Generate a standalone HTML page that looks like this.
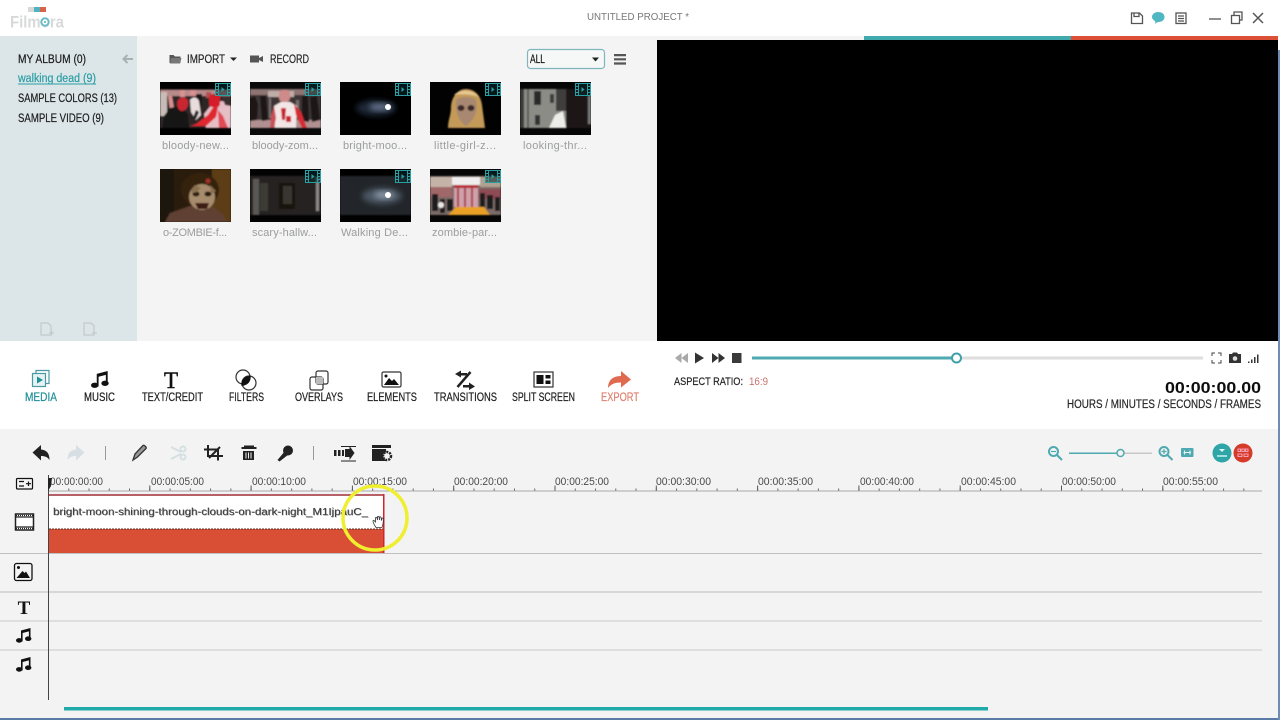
<!DOCTYPE html>
<html><head><meta charset="utf-8"><title>Filmora</title>
<style>
html,body{margin:0;padding:0;width:1280px;height:720px;overflow:hidden;background:#fff}
svg{display:block;font-family:"Liberation Sans",sans-serif}
.l{font-size:11.500px;fill:#1c1c1c;stroke:#1c1c1c;stroke-width:.2px}
.t{font-size:11.500px;fill:#262626;stroke:#262626;stroke-width:.2px}
.c{font-size:11px;fill:#9b9d9e}
.r{font-size:11px;fill:#4a4a4a}
</style></head><body>
<svg width="1280" height="720" viewBox="0 0 1280 720" xmlns="http://www.w3.org/2000/svg">
<defs>
<filter id="b1" x="-20%" y="-20%" width="140%" height="140%"><feGaussianBlur stdDeviation=".8"/></filter>
<filter id="b3" x="-40%" y="-40%" width="180%" height="180%"><feGaussianBlur stdDeviation="3"/></filter>
<filter id="s" x="-5%" y="-5%" width="110%" height="110%"><feGaussianBlur stdDeviation="0.25"/></filter>
<g id="film" fill="none" stroke="#2a9ea3" stroke-width="1"><rect x="0.5" y="0.5" width="15" height="12" fill="#0a2a2c" fill-opacity=".55"/><path d="M3.5 .5v12M12.5 .5v12M.5 3.5h3M.5 6.5h3M.5 9.5h3M12.5 3.5h3M12.5 6.5h3M12.5 9.5h3"/><path d="M6.5 4l3 2.500-3 2.500z" fill="#2a9ea3" stroke="none"/></g>
<g id="note" fill="#111"><path d="M5 2.500 14.500 0v11h-1.600V3.400L6.600 5v8.500H5z"/><ellipse cx="3.200" cy="12.400" rx="3.200" ry="2.300"/><ellipse cx="12.200" cy="10.700" rx="3.200" ry="2.300"/></g>
<clipPath id="th"><rect width="71" height="53"/></clipPath>
</defs>

<!-- base -->
<rect width="1280" height="720" fill="#fff"/>
<rect x="0" y="36" width="137" height="305" fill="#dce6e8"/>
<rect x="137" y="36" width="520" height="305" fill="#f4f4f4"/>
<rect x="657" y="40" width="621" height="301" fill="#000"/>
<rect x="657" y="36" width="207" height="4" fill="#f4f4f4"/>
<rect x="864" y="36" width="207" height="4" fill="#3fa9ad"/>
<rect x="1071" y="36" width="207" height="4" fill="#dd5038"/>
<rect x="0" y="429" width="1278" height="289" fill="#f3f3f3"/>
<rect x="0" y="718" width="1280" height="2" fill="#5a7aa8"/>
<rect x="1278" y="50" width="2" height="670" fill="#6f8cb4"/>

<!-- logo -->
<g filter="url(#s)">
<rect x="28" y="7" width="6" height="5" fill="#d8d8d8"/><rect x="34" y="7" width="6" height="5" fill="#4fb4c0"/><rect x="40" y="7" width="6" height="5" fill="#d9624a"/>
<text x="10" y="27.500" font-size="16.500" font-weight="bold" fill="#d8dada" textLength="54" lengthAdjust="spacingAndGlyphs">Filmora</text>
<circle cx="45" cy="22" r="5" fill="#fff"/><circle cx="45" cy="22" r="3.700" fill="none" stroke="#6bbcc7" stroke-width="2"/><circle cx="45" cy="22" r="1" fill="#4fb0bd"/>
</g>
<text x="587" y="20" font-size="10.500" fill="#777" textLength="102" lengthAdjust="spacingAndGlyphs">UNTITLED PROJECT *</text>

<!-- window icons -->
<g fill="none" stroke="#555" stroke-width="1.300">
<path d="M1131.500 13h8l3 3v7.500h-11z"/><path d="M1134 13v3.500h5V13"/>
<rect x="1176" y="13" width="10" height="10.500"/><path d="M1178 16h6M1178 18.500h6M1178 21h6"/>
<path d="M1209 19h12"/><rect x="1231.500" y="15.500" width="8" height="8"/><path d="M1234 15v-3h8v8h-2.500"/>
<path d="M1253 13l10 10M1263 13l-10 10" stroke-width="1.500"/>
</g>
<path d="M1158 12c4 0 6.500 2 6.500 5s-2.500 5-6 5c-1 0-1.500 .5-3.500 2 .5-1.500 .5-2.500 0-3-1.500-1-3-2.300-3-4 0-3 3-5 6-5z" fill="#4fb6c2"/>

<!-- sidebar -->
<g filter="url(#s)">
<text class="l" x="18" y="63" textLength="68" lengthAdjust="spacingAndGlyphs">MY ALBUM (0)</text>
<text class="l" x="18" y="82" style="fill:#2b9ea5;stroke:#2b9ea5" textLength="78" lengthAdjust="spacingAndGlyphs">walking dead (9)</text>
<rect x="18" y="83.500" width="78" height="1" fill="#2b9ea5"/>
<text class="l" x="18" y="102" textLength="99" lengthAdjust="spacingAndGlyphs">SAMPLE COLORS (13)</text>
<text class="l" x="18" y="122" textLength="86" lengthAdjust="spacingAndGlyphs">SAMPLE VIDEO (9)</text>
</g>
<path d="M133 59h-9M127.500 55l-4 4 4 4" fill="none" stroke="#a9b0b2" stroke-width="2"/>
<g fill="none" stroke="#c4cacb" stroke-width="1.300"><path d="M41 323h7l3 3v9H41z"/><path d="M84 323h7l3 3v9H84z"/><path d="M49 333h5M51.500 330.500v5M92 333h5"/></g>

<!-- media header -->
<path d="M169.500 55h4l1.500 1.500h5.500V63h-11z" fill="#555"/>
<path d="M171 58h10.500l-1.500 5.500h-10z" fill="#777"/>
<text class="t" x="187" y="63" textLength="38" lengthAdjust="spacingAndGlyphs">IMPORT</text>
<path d="M230 57.500h7l-3.500 3.500z" fill="#222"/>
<path d="M250 55.500h9v7h-9zM259 58l4-2v6l-4-2z" fill="#555"/>
<text class="t" x="270" y="63" textLength="39" lengthAdjust="spacingAndGlyphs">RECORD</text>
<rect x="527.500" y="49.500" width="77" height="19" rx="3" fill="#f6f8f8" stroke="#7fb5bd" stroke-width="1.200"/>
<text class="t" x="530" y="63" textLength="15" lengthAdjust="spacingAndGlyphs" style="fill:#111">ALL</text>
<path d="M592 57.500h7l-3.500 4z" fill="#222"/>
<path d="M614 54h12v2.200h-12zM614 58.200h12v2.200h-12zM614 62.400h12v2.200h-12z" fill="#555"/>

<!-- thumbnails -->
<g transform="translate(160 82)" clip-path="url(#th)"><rect width="71" height="53" fill="#000"/>
<g filter="url(#b1)">
<rect y="7" width="71" height="39" fill="#2e2626"/>
<rect x="0" y="8" width="71" height="6" fill="#b88a8a"/>
<rect x="0" y="10" width="7" height="24" fill="#c8bcb8"/>
<path d="M8 14l4 0 2 12-4 2zM20 8h5v7h-5zM30 8h6v6h-6z" fill="#d89090"/>
<path d="M36 12h6v12h-6z" fill="#1a1818"/>
<path d="M46 10h5v6h-5z" fill="#b05050"/>
<path d="M2 46l2-12 6-8 10-2 8 8 1 14z" fill="#151313"/>
<path d="M18 18c3-4 9-3 10 1 1 5-2 10-6 10s-6-6-4-11z" fill="#c92833"/>
<path d="M30 18c3-4 7-3 9 1l2 14-5 5-5-8z" fill="#e8dcdc"/>
<path d="M36 28l-3 8 3 1 3-7z" fill="#222"/>
<path d="M52 22l10-3 9 3v24H46l-2-14z" fill="#e6bec6"/>
<path d="M30 44l6-2 12-9 6-9 4 1-2 10-10 9z" fill="#e0262f"/>
<rect x="49" y="12" width="11" height="13" rx="3" fill="#d41f2b"/>
<path d="M58 28l5 6 5 12h-9z" fill="#e24a55"/>
<path d="M62 14l9 0v10l-6-1z" fill="#3a2e2e"/>
</g>
<use href="#film" x="55" y="1"/></g>

<g transform="translate(250 82)" clip-path="url(#th)"><rect width="71" height="53" fill="#0a0a0a"/>
<g filter="url(#b1)">
<rect y="7" width="71" height="39" fill="#3d3534"/>
<rect x="0" y="7" width="71" height="6" fill="#8e7472"/>
<rect x="18" y="9" width="26" height="6" fill="#c0aca8"/>
<rect x="0" y="38" width="71" height="8" fill="#b09090"/>
<path d="M0 16l5-2 3 8-1 16-7 1zM10 14l6 0 2 24-6 1zM52 14l6 0 1 26-7-1zM60 15l7-1 3 24-8 2z" fill="#1a1716"/>
<path d="M19 16h2v20h-2zM46 18h3v16h-3z" fill="#787070"/>
<path d="M24 24l7-4h9l7 4-1 22H25z" fill="#f2e6e6"/>
<rect x="29" y="8" width="11" height="12" rx="4" fill="#cf8a8a"/>
<path d="M31 26h5l-1 12h-3zM36 34h5v6h-5z" fill="#c9212d"/>
<path d="M44 22l7 8 6 16h-5l-6-13z" fill="#d62b36"/>
<path d="M24 24l-3 10-1 12h4l2-10z" fill="#c85058"/>
</g>
<use href="#film" x="55" y="1"/></g>

<g transform="translate(340 82)" clip-path="url(#th)"><rect width="71" height="53" fill="#000"/>
<ellipse cx="36" cy="26" rx="20" ry="8" fill="#1e2636" filter="url(#b3)"/>
<ellipse cx="40" cy="25" rx="11" ry="3.500" fill="#66748f" filter="url(#b3)"/>
<circle cx="48" cy="25" r="3" fill="#fff" filter="url(#s)"/>
<use href="#film" x="55" y="1"/></g>

<g transform="translate(430 82)" clip-path="url(#th)"><rect width="71" height="53" fill="#020202"/>
<g filter="url(#b1)"><path d="M18 46c0-8 3-13 3-20 0-10 6-19 15-19s15 7 16 16c1 8 2 15 3 23z" fill="#c49a58"/><path d="M26 18c3-4 17-4 20 0 2 8 0 19-10 26-7-4-11-15-10-26z" fill="#a88870"/><ellipse cx="31" cy="26" rx="3.500" ry="3" fill="#3a2a2a"/><ellipse cx="41" cy="26" rx="3.500" ry="3" fill="#3a2a2a"/><path d="M24 13c6-6 19-6 25 2-6-3-19-3-25-2z" fill="#e6c890"/></g>
<use href="#film" x="55" y="1"/></g>

<g transform="translate(520 82)" clip-path="url(#th)"><rect width="71" height="53" fill="#060606"/>
<g filter="url(#b1)"><rect y="7" width="46" height="39" fill="#8c8c86"/><rect x="46" y="7" width="25" height="39" fill="#1a1816"/><rect x="14" y="9" width="7" height="14" fill="#2a2a2a"/><rect x="30" y="12" width="4" height="9" fill="#3a3a3a"/><rect x="15" y="33" width="5" height="10" fill="#333"/><path d="M29 46l6-13 8-4 3 17z" fill="#ecece8"/><rect x="0" y="7" width="4" height="39" fill="#3a3a38"/><rect x="7" y="7" width="2" height="39" fill="#5a5a56"/><rect x="36" y="7" width="10" height="22" fill="#403e3c"/><rect x="68" y="14" width="3" height="28" fill="#777"/></g>
<use href="#film" x="55" y="1"/></g>

<g transform="translate(160 169)" clip-path="url(#th)"><rect width="71" height="53" fill="#1a120a"/>
<g filter="url(#b1)"><rect width="71" height="53" fill="#2a1c0e"/><rect x="52" width="19" height="53" fill="#5c3c18"/><rect x="0" width="14" height="53" fill="#1c1810"/><path d="M5 53l5-9 20-7h22l12 9 3 7z" fill="#5e4030"/><ellipse cx="40" cy="21" rx="19" ry="17" fill="#36220f"/><ellipse cx="42" cy="28" rx="13" ry="13" fill="#a68c6c"/><ellipse cx="36" cy="25" rx="3.500" ry="2.500" fill="#2a1a10"/><ellipse cx="48" cy="25" rx="3.500" ry="2.500" fill="#2a1a10"/><path d="M35 34h14l-2 6h-9z" fill="#3e1a14"/><circle cx="48" cy="12" r="2.500" fill="#a03028"/><path d="M30 22l5-6 6 3-6 5zM50 16l6 6-5 3z" fill="#8a7050"/></g></g>

<g transform="translate(250 169)" clip-path="url(#th)"><rect width="71" height="53" fill="#030303"/>
<g filter="url(#b1)"><rect y="7" width="71" height="39" fill="#262320"/><rect x="3" y="10" width="6" height="36" fill="#5a5854"/><rect x="10" y="14" width="8" height="28" fill="#3c3a36"/><rect x="29" y="14" width="16" height="26" fill="#14120f"/><rect x="33" y="17" width="9" height="18" fill="#3a3632"/><rect x="66" y="8" width="3" height="34" fill="#8a8884"/></g>
<use href="#film" x="55" y="1"/></g>

<g transform="translate(340 169)" clip-path="url(#th)"><rect width="71" height="53" fill="#000"/>
<rect y="7" width="71" height="39" fill="#23272c" filter="url(#b1)"/>
<ellipse cx="42" cy="27" rx="20" ry="8" fill="#4c5664" filter="url(#b3)"/>
<ellipse cx="44" cy="26" rx="10" ry="3.500" fill="#8e9aaa" filter="url(#b3)"/>
<circle cx="48" cy="26" r="3" fill="#fff" filter="url(#s)"/>
<use href="#film" x="55" y="1"/></g>

<g transform="translate(430 169)" clip-path="url(#th)"><rect width="71" height="53" fill="#060606"/>
<g filter="url(#b1)">
<rect y="7" width="71" height="39" fill="#7c6c68"/>
<rect x="22" y="8" width="28" height="8" fill="#f0eeee"/>
<rect x="0" y="8" width="22" height="10" fill="#c4b4a8"/>
<rect x="50" y="8" width="21" height="10" fill="#b0a090"/>
<rect x="0" y="18" width="22" height="10" fill="#a06868"/>
<rect x="24" y="16" width="24" height="22" fill="#d0a0aa"/>
<path d="M24 16h24v3H24z" fill="#b8222c"/><path d="M27 18h2v20h-2zM34 18h2v20h-2zM41 18h2v20h-2z" fill="#a8404a"/>
<rect x="49" y="20" width="22" height="10" fill="#8e4c54"/>
<path d="M2 25h6v17H2zM10 30h5v14h-5zM17 30h6v12h-6zM50 24h5v14h-5zM57 26h6v14h-6zM65 28h5v14h-5z" fill="#1c1a1a"/>
<circle cx="11" cy="36" r="3" fill="#e8e8e8"/>
<path d="M18 46l8-8h28l6 8z" fill="#eaa028"/>
</g>
<use href="#film" x="55" y="1"/></g>

<g filter="url(#s)">
<text class="c" x="162" y="149" textLength="67" lengthAdjust="spacing">bloody-new...</text>
<text class="c" x="252" y="149" textLength="66" lengthAdjust="spacing">bloody-zom...</text>
<text class="c" x="343" y="149" textLength="64" lengthAdjust="spacing">bright-moo...</text>
<text class="c" x="434" y="149" textLength="62" lengthAdjust="spacing">little-girl-z...</text>
<text class="c" x="523" y="149" textLength="64" lengthAdjust="spacing">looking-thr...</text>
<text class="c" x="163" y="236" textLength="64" lengthAdjust="spacing">o-ZOMBIE-f...</text>
<text class="c" x="252" y="236" textLength="65" lengthAdjust="spacing">scary-hallw...</text>
<text class="c" x="341" y="236" textLength="67" lengthAdjust="spacing">Walking De...</text>
<text class="c" x="432" y="236" textLength="65" lengthAdjust="spacing">zombie-par...</text>
</g>

<!-- transport -->
<path d="M681.500 353l-6.500 5 6.500 5zM688 353l-6.500 5 6.500 5z" fill="#a9a9a9"/>
<path d="M695 352.500l9 5.500-9 5.500z" fill="#333"/>
<path d="M712 353l6.500 5-6.500 5zM718.500 353l6.500 5-6.500 5z" fill="#333"/>
<rect x="732" y="353" width="9.500" height="10" fill="#3a3a3a"/>
<rect x="956" y="356.500" width="247" height="3" fill="#dedede"/>
<rect x="752" y="356.500" width="204" height="3" fill="#4fa9b0"/>
<circle cx="956.500" cy="358" r="4.500" fill="#fff" stroke="#3fa0a8" stroke-width="2"/>
<g fill="none" stroke="#444" stroke-width="1"><path d="M1212 356v-3h3M1221 356v-3h-3M1212 360v3h3M1221 360v3h-3"/></g>
<path d="M1229 354h3l1-1.500h4l1 1.500h3v9h-12z" fill="#333"/><circle cx="1235" cy="358.500" r="2.300" fill="#ddd"/>
<path d="M1248 361.500h1.500v1.500H1248zM1251 359.500h1.500v3.500H1251zM1254 357h1.500v6H1254zM1257 354.500h1.500v8.500H1257z" fill="#333"/>
<g filter="url(#s)">
<text class="t" x="674" y="385" style="font-size:11px;fill:#222" textLength="69" lengthAdjust="spacingAndGlyphs">ASPECT RATIO:</text>
<text x="749" y="385" font-size="11" fill="#c8736c" textLength="19" lengthAdjust="spacingAndGlyphs">16:9</text>
<text x="1165" y="393" font-size="15.500" font-weight="bold" fill="#111" textLength="96" lengthAdjust="spacingAndGlyphs">00:00:00.00</text>
<text class="t" x="1067" y="408" textLength="194" lengthAdjust="spacingAndGlyphs">HOURS / MINUTES / SECONDS / FRAMES</text>
</g>

<!-- main toolbar icons -->
<g fill="none" stroke="#4a9aa3" stroke-width="1.200"><rect x="32.500" y="373.500" width="13" height="13" fill="#e6f2f3"/><path d="M36 373v-2.500h13v13h-3"/></g>
<path d="M37 376.500l6 3.500-6 3.500z" fill="#1f8f98"/>
<use href="#note" transform="translate(91 371) scale(1.150)"/>
<text x="171" y="388" font-family="Liberation Serif" font-size="23" fill="#111" stroke="#111" stroke-width=".5" text-anchor="middle">T</text>
<g fill="none" stroke="#333" stroke-width="1.200"><circle cx="243" cy="377" r="7"/><circle cx="249" cy="383" r="7"/></g><path d="M241.500 386c-1-6 3-10 9-10.500 1 6-3 10-9 10.500z" fill="#111"/>
<g fill="none" stroke="#333" stroke-width="1.200"><rect x="310" y="377" width="13" height="13" rx="2"/><rect x="316" y="371" width="12" height="13" rx="2"/></g><rect x="316" y="377" width="7" height="7" fill="#bbb"/>
<rect x="382" y="372" width="19" height="15" rx="1.500" fill="#fff" stroke="#333" stroke-width="1.200"/><circle cx="386" cy="376" r="1.500" fill="#111"/><path d="M384 385l5-7 3 3 2-2 5 6z" fill="#111"/>
<path d="M455 374l6-3.500v2.500h6v2.500h-6v2zM475 386.500l-6 3.500v-2.500h-6V385h6v-2.500z" fill="#222"/>
<path d="M457.500 387l13-15" stroke="#222" stroke-width="2.500"/>
<rect x="534" y="372" width="19" height="15" fill="#fff" stroke="#333" stroke-width="1.200"/><rect x="536.500" y="375" width="7" height="9" fill="#111"/><rect x="545.500" y="375" width="5" height="3.500" fill="#111"/><rect x="545.500" y="380.500" width="5" height="3.500" fill="#111"/>
<path d="M608 388c0-8 5-12 13-12v-5l10 8.500-10 8v-5c-6 0-10 1.500-13 5.500z" fill="#e0694f"/>
<g filter="url(#s)">
<text class="l" x="25" y="401" style="fill:#1f8f98;stroke:#1f8f98" textLength="32" lengthAdjust="spacingAndGlyphs">MEDIA</text>
<text class="l" x="84" y="401" textLength="31" lengthAdjust="spacingAndGlyphs">MUSIC</text>
<text class="l" x="142" y="401" textLength="61" lengthAdjust="spacingAndGlyphs">TEXT/CREDIT</text>
<text class="l" x="229" y="401" textLength="35" lengthAdjust="spacingAndGlyphs">FILTERS</text>
<text class="l" x="295" y="401" textLength="48" lengthAdjust="spacingAndGlyphs">OVERLAYS</text>
<text class="l" x="367" y="401" textLength="50" lengthAdjust="spacingAndGlyphs">ELEMENTS</text>
<text class="l" x="434" y="401" textLength="63" lengthAdjust="spacingAndGlyphs">TRANSITIONS</text>
<text class="l" x="512" y="401" textLength="63" lengthAdjust="spacingAndGlyphs">SPLIT SCREEN</text>
<text class="l" x="601" y="401" style="fill:#e07f6e;stroke:#e07f6e" textLength="38" lengthAdjust="spacingAndGlyphs">EXPORT</text>
</g>

<!-- edit toolbar -->
<path d="M32.500 452.500l8.500-7.500v4.500c6 .5 8.500 4 8.500 10.500-2-3-4.500-4-8.500-4v4.500z" fill="#222"/>
<path d="M84.500 452.500l-8.500-7.500v4.500c-6 .5-8.500 4-8.500 10.500 2-3 4.500-4 8.500-4v4.500z" fill="#d6e0e2"/>
<path d="M105.500 446v14M313.500 446v14" stroke="#999" stroke-width="1"/>
<path d="M133 460l2-6 8-8.500c1-1 4 2 3 3l-8.500 8.500z" fill="#999" stroke="#333" stroke-width="1.300"/>
<g fill="none" stroke="#d6e0e2" stroke-width="2"><circle cx="183" cy="449" r="2.500"/><circle cx="183" cy="457" r="2.500"/><path d="M171 447l10 5M171 459l10-5"/></g>
<path d="M204 449.500h14v11M208 445v11h15M220 447l-11 11" fill="none" stroke="#222" stroke-width="2"/>
<path d="M244 445.500h10v1.500h2.500v2h-15v-2h2.500zM243 451h11v9h-11z" fill="#222"/><path d="M246 452.500v6M248.500 452.500v6M251 452.500v6" stroke="#f3f3f3" stroke-width="1"/>
<path d="M277.500 460l7.500-9 3.500 3.500-9 7z" fill="#222"/><circle cx="288" cy="450.500" r="5" fill="#222"/>
<path d="M334 450h2.500v6H334zM338 450h2.500v6H338zM342 450h2v6h-2zM345 449h4.500v-3l5 7-5 7v-3H345z" fill="#222"/>
<path d="M341 446.500h15M341 461h15" stroke="#222" stroke-width="1"/>
<rect x="372" y="445" width="19" height="3" fill="#222"/><rect x="372" y="449" width="14" height="12" fill="#222"/><circle cx="387" cy="456" r="4" fill="#f3f3f3" stroke="#222" stroke-width="2.500" stroke-dasharray="2 1"/>

<!-- zoom tools -->
<g fill="none" stroke="#4fa9b0" stroke-width="2"><circle cx="1053.500" cy="451.500" r="4.500"/><path d="M1057 455l5 5"/><path d="M1051 451.500h5" stroke-width="1.200"/>
<circle cx="1164" cy="451.500" r="4.500"/><path d="M1167.500 455l5 5"/><path d="M1161.500 451.500h5M1164 449v5" stroke-width="1.200"/></g>
<rect x="1069" y="452.500" width="83" height="1.500" fill="#c8c8c8"/><rect x="1069" y="452.500" width="51" height="1.500" fill="#4fa9b0"/>
<circle cx="1120.500" cy="453" r="3.500" fill="#f3f3f3" stroke="#4fa9b0" stroke-width="1.500"/>
<rect x="1181" y="448" width="12.500" height="9" rx="1" fill="#4fa9b0"/><path d="M1183.500 452.500h7.500M1184.500 450.500v4M1190 450.500v4" stroke="#e8f4f4" stroke-width="1.100" fill="none"/>
<circle cx="1222" cy="453" r="9.500" fill="#2fa5a8"/><path d="M1219 449h6l-3 3z" fill="#dff"/><path d="M1217 456h10" stroke="#dff" stroke-width="1.300"/>
<circle cx="1243" cy="453" r="9.500" fill="#d63b29"/><path d="M1238 449h2.500v2.500H1238zM1241.800 449h2.500v2.500h-2.500zM1245.500 449h2.500v2.500h-2.500zM1238 454h4v2.500h-4zM1244 454h4v2.500h-4z" fill="none" stroke="#fbd" stroke-width=".8"/>

<!-- track icons -->
<rect x="16.500" y="478.500" width="16" height="10.500" rx="1" fill="none" stroke="#111" stroke-width="1.200"/><path d="M19 481.500h5M19 486h5M26 483.700h5M28.500 481.500v4.500" stroke="#111" stroke-width="1.200"/>
<rect x="15.500" y="514" width="18" height="16" fill="#fff" stroke="#222" stroke-width="1.500"/><path d="M15.500 517h18M15.500 527h18" stroke="#222" stroke-width="1.200"/><path d="M16 515.500h17M16 528.500h17" stroke="#222" stroke-width="1.200" stroke-dasharray="1 1"/>
<rect x="14.500" y="563.500" width="17.500" height="17" rx="2" fill="none" stroke="#111" stroke-width="1.300"/><circle cx="18.500" cy="567.500" r="1.500" fill="#111"/><path d="M16.500 578l6-7 2 2 1.500-1.500 4 6.500z" fill="#111"/>
<text x="24" y="614" font-family="Liberation Serif" font-size="19" font-weight="bold" fill="#111" text-anchor="middle">T</text>
<use href="#note" x="16" y="628"/>
<use href="#note" x="16" y="657"/>

<!-- ruler -->
<path d="M48 491h1214" stroke="#a8a8a8" stroke-width="1"/>
<path d="M48 489.500H1262" stroke="#666" stroke-width="2" stroke-dasharray="1 19.260"/>
<path d="M48 488H1262" stroke="#555" stroke-width="5" stroke-dasharray="1 100.300"/>
<g filter="url(#s)">
<text class="r" x="50" y="485" textLength="53" lengthAdjust="spacingAndGlyphs">00:00:00:00</text>
<text class="r" x="151" y="485" textLength="53" lengthAdjust="spacingAndGlyphs">00:00:05:00</text>
<text class="r" x="252" y="485" textLength="54" lengthAdjust="spacingAndGlyphs">00:00:10:00</text>
<text class="r" x="353" y="485" textLength="54" lengthAdjust="spacingAndGlyphs">00:00:15:00</text>
<text class="r" x="454" y="485" textLength="54" lengthAdjust="spacingAndGlyphs">00:00:20:00</text>
<text class="r" x="555" y="485" textLength="54" lengthAdjust="spacingAndGlyphs">00:00:25:00</text>
<text class="r" x="656" y="485" textLength="55" lengthAdjust="spacingAndGlyphs">00:00:30:00</text>
<text class="r" x="758" y="485" textLength="55" lengthAdjust="spacingAndGlyphs">00:00:35:00</text>
<text class="r" x="860" y="485" textLength="54" lengthAdjust="spacingAndGlyphs">00:00:40:00</text>
<text class="r" x="961" y="485" textLength="55" lengthAdjust="spacingAndGlyphs">00:00:45:00</text>
<text class="r" x="1062" y="485" textLength="54" lengthAdjust="spacingAndGlyphs">00:00:50:00</text>
<text class="r" x="1163" y="485" textLength="55" lengthAdjust="spacingAndGlyphs">00:00:55:00</text>
</g>

<!-- track lines -->
<path d="M0 553.500h1262" stroke="#c0c0c0"/>
<path d="M0 592h1262" stroke="#cecece" stroke-width="1.500"/>
<path d="M0 621h1262" stroke="#d2d2d2" stroke-width="1.200"/>
<path d="M0 650h1262" stroke="#d2d2d2" stroke-width="1.200"/>

<!-- clip -->
<rect x="49" y="494" width="335" height="59" fill="#d94f35"/>
<rect x="49" y="496" width="334" height="33" fill="#fff"/>
<rect x="49" y="494" width="334" height="2" fill="#b86068"/>
<rect x="383" y="494" width="1.500" height="59" fill="#d4232a"/>
<path d="M49 529h334" stroke="#5a2a20" stroke-width="1" stroke-dasharray="2 1"/>
<path d="M48.500 475v225" stroke="#444" stroke-width="1"/>
<path d="M48 478h4l-1 8-3 5z" fill="#222"/>
<g filter="url(#s)">
<text x="53.600" y="515.400" font-size="10" fill="#888" textLength="315" lengthAdjust="spacingAndGlyphs">bright-moon-shining-through-clouds-on-dark-night_M1IjpauC_</text>
<text x="53" y="515" font-size="10" fill="#3a3a3a" textLength="315" lengthAdjust="spacingAndGlyphs">bright-moon-shining-through-clouds-on-dark-night_M1IjpauC_</text>
</g>

<!-- highlight + cursor -->
<circle cx="375" cy="518" r="32" fill="none" stroke="#efee2f" stroke-width="3.500"/>
<path d="M375 526c-1-2-2-3-2-5 0-1 1-1 1.500 0l1 1v-4c0-1 1.500-1 1.500 0l.5 2v-3c0-1 1.500-1 1.500 0l.5 3v-2.500c0-1 1.500-1 1.500 0l.5 3 .5-2c.5-1 1.500-.5 1.500 .5l-.5 5-1 3.500h-6z" fill="#fff" stroke="#333" stroke-width=".8"/>

<!-- scrollbar -->
<rect x="64" y="707" width="924" height="3.500" fill="#22a9a9"/>
</svg>
</body></html>
